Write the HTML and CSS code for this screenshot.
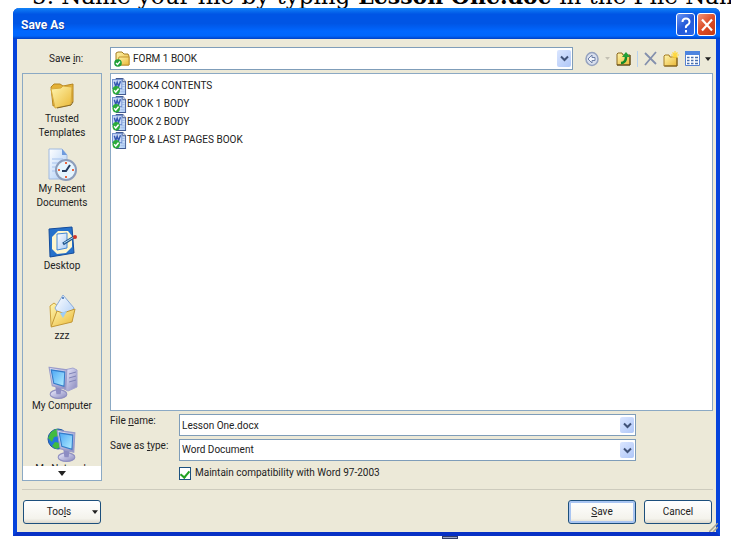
FILE: index.html
```html
<!DOCTYPE html>
<html lang="en">
<head>
    <meta charset="UTF-8">
    <meta name="viewport" content="width=device-width, initial-scale=1.0">
    <title>Save As</title>
    <link rel="stylesheet" href="styles.css">
</head>
<body>
    <!-- Shared icons -->
    <svg class="defs" width="0" height="0" aria-hidden="true">
        <defs>
            <linearGradient id="gold" x1="0" y1="0" x2="1" y2="1">
                <stop offset="0" stop-color="#fff6b0"/>
                <stop offset="1" stop-color="#eab735"/>
            </linearGradient>
            <linearGradient id="screen" x1="0" y1="0" x2="1" y2="1">
                <stop offset="0" stop-color="#4aa5f5"/>
                <stop offset="1" stop-color="#b5f0ff"/>
            </linearGradient>
            <linearGradient id="metal" x1="0" y1="0" x2="1" y2="1">
                <stop offset="0" stop-color="#eeeeff"/>
                <stop offset="1" stop-color="#8888bd"/>
            </linearGradient>
            <linearGradient id="paper" x1="0" y1="0" x2="1" y2="1">
                <stop offset="0" stop-color="#ffffff"/>
                <stop offset="1" stop-color="#a9cbf6"/>
            </linearGradient>
        </defs>
        <symbol id="chevron" viewBox="0 0 9 7">
            <path d="M1 1.5l3.5 3.5L8 1.5" fill="none" stroke="#405278" stroke-width="2"/>
        </symbol>
        <symbol id="triangle" viewBox="0 0 8 5">
            <path d="M0 0h8L4 5z" fill="currentColor"/>
        </symbol>
        <symbol id="word-doc" viewBox="0 0 16 16" preserveAspectRatio="none">
            <path d="M4.500 .5h7l3 3v12h-10z" fill="url(#paper)" stroke="#435b91"/>
            <path d="M11.500 .5v3h3" fill="#fff" stroke="#435b91"/>
            <path d="M11 6h2.500M11 8h2.500M9 11h4.500M9 13h4.500" stroke="#a3bce6"/>
            <rect x="0.500" y="1.500" width="10" height="8.500" fill="#cddcf8" stroke="#6f8fd0"/>
            <path d="M2.500 3.500L4 8l1.500-4L7 8l2-5" fill="none" stroke="#3358b0" stroke-width="1.500"/>
            <circle cx="4.500" cy="11.500" r="4" fill="#2bab3c"/>
            <path d="M2.300 11.500L4 13.200l3-3.200" fill="none" stroke="#fff" stroke-width="1.500"/>
        </symbol>
        <symbol id="monitor" viewBox="0 0 22 28" preserveAspectRatio="none">
            <ellipse cx="11" cy="24" rx="8" ry="3.500" fill="url(#metal)" stroke="#8f8fc0"/>
            <path d="M8 18l6 1-1 5H9z" fill="#8d8dc3"/>
            <path d="M2 2l17 2-1 16L5 17z" fill="url(#metal)" stroke="#9a9cca"/>
            <path d="M4 4l13 1.800-.8 11.700L6.500 15z" fill="url(#screen)" stroke="#347bc9"/>
        </symbol>
    </svg>

    <p class="document-line">5. Name your file by typing <b>Lesson One.doc</b> in the File Name</p>

    <form class="dialog">
        <header class="title-bar">
            <h1>Save As</h1>
            <button type="button" class="title-btn" aria-label="Help">
                <svg width="14" height="18" viewBox="0 0 14 18"><path d="M3.500 6Q3.500 2.500 7 2.500T10.500 6Q10.500 8 8.500 9T7 12M7 14v2.500" fill="none" stroke="#fff" stroke-width="2"/></svg>
            </button>
            <button type="button" class="title-btn close" aria-label="Close">
                <svg width="14" height="14" viewBox="0 0 14 14"><path d="M2 1.500l10 11M12 1.500l-10 11" stroke="#fff" stroke-width="2.200"/></svg>
            </button>
        </header>

        <div class="dialog-body">
            <div class="location">
                <label for="saveIn">Save <u>i</u>n:</label>
                <div class="combo folder-combo">
                    <svg class="combo-icon" width="16" height="16" viewBox="0 0 16 16">
                        <path d="M2 14V2l2-1h4l2 2h4l1 2v9z" fill="url(#gold)" stroke="#a47c24"/>
                        <path d="M3 14l2-8h10v8z" fill="url(#gold)" stroke="#c29431"/>
                        <circle cx="4" cy="12" r="3.800" fill="#20a038"/>
                        <path d="M2 12l1.500 1.500L6 10.500" fill="none" stroke="#fff" stroke-width="1.300"/>
                    </svg>
                    <select id="saveIn"><option>FORM 1 BOOK</option></select>
                    <span class="combo-arrow"><svg width="9" height="7"><use href="#chevron"/></svg></span>
                </div>
                <div class="toolbar">
                    <button type="button" aria-label="Back">
                        <svg width="14" height="16" viewBox="0 0 14 16"><ellipse cx="7" cy="8" rx="6" ry="6.500" fill="#d8dfed" stroke="#95a2bf" stroke-width="1.500"/><path d="M3 8l4-4v2.500h3v3H7V12z" fill="#f3f6fc" stroke="#6f80a6"/></svg>
                    </button>
                    <button type="button" class="muted" aria-label="Back history">
                        <svg width="5" height="3"><use href="#triangle"/></svg>
                    </button>
                    <button type="button" aria-label="Up one level">
                        <svg width="15" height="16" viewBox="0 0 15 16"><path d="M1 14V3l1-1h4l1 2h7v10z" fill="url(#gold)" stroke="#8a671e"/><path d="M1 14h13V4" fill="none" stroke="#554315"/><path d="M5 12q5 0 5-6" fill="none" stroke="#148b29" stroke-width="2.500"/><path d="M6 6l4-5 4 5z" fill="#20a038"/></svg>
                    </button>
                    <span class="divider"></span>
                    <button type="button" aria-label="Delete">
                        <svg width="13" height="15" viewBox="0 0 13 15"><path d="M1 2l11 11M12 1L1 14" stroke="#8490ad" stroke-width="1.800"/></svg>
                    </button>
                    <button type="button" aria-label="Create new folder">
                        <svg width="16" height="16" viewBox="0 0 16 16"><path d="M1 15V5l1-1h4l1 2h7v9z" fill="url(#gold)" stroke="#a57c24"/><path d="M1.500 15h12.500V7" fill="none" stroke="#7a5c1c"/><path d="M12 0v8M8 4h8M9.500 1.500l5 5M14.500 1.500l-5 5" stroke="#ffd83d" stroke-width="1.200"/></svg>
                    </button>
                    <button type="button" class="views" aria-label="Views">
                        <svg width="15" height="15" viewBox="0 0 15 15"><path d="M.5.5h14v14H.5z" fill="#fff" stroke="#5681d1"/><path d="M0 0h15v4H0z" fill="#4d84df"/><path d="M2 6.500h2.500M6 6.500h2.500M10 6.500h3M2 9.500h2.500M6 9.500h2.500M10 9.500h3M2 12.500h2.500M6 12.500h2.500M10 12.500h3" stroke="#486fae" stroke-width="1.500"/></svg>
                        <svg width="6" height="4"><use href="#triangle"/></svg>
                    </button>
                </div>
            </div>

            <div class="columns">
                <nav class="places">
                    <div class="place-list">
                        <a href="#" class="place">
                            <svg width="34" height="34" viewBox="0 0 34 34"><path d="M8 28L6 9l3-3h6l3 2 10-2v18z" fill="#e4b137" stroke="#b58623"/><path d="M6 11l10-1 2-2 9 1-1 18-16 3z" fill="url(#gold)" stroke="#d7aa3d"/><path d="M12 30l14-3 2-3" fill="none" stroke="#856929"/></svg>
                            Trusted<br>Templates
                        </a>
                        <a href="#" class="place">
                            <svg width="34" height="34" viewBox="0 0 34 34"><path d="M4 1h13l5 6v24H4z" fill="url(#paper)" stroke="#a0b9df"/><path d="M17 1v6h5" fill="#6f9bdd"/><path d="M7 11h11M7 15h8M7 19h6M7 23h5" stroke="#a6c3ee"/><circle cx="21" cy="22" r="10" fill="#e5f5ff" stroke="#8c9dbb" stroke-width="2"/><path d="M21 14v2M29 22h-2M21 30v-2M13 22h2" stroke="#ee653d" stroke-width="2"/><path d="M25 17l-4 6h-4" fill="none" stroke="#263d60" stroke-width="2"/></svg>
                            My Recent<br>Documents
                        </a>
                        <a href="#" class="place">
                            <svg width="34" height="34" viewBox="0 0 34 34"><path d="M4 4l23-2 2 26-24 4z" fill="#2772cb" stroke="#144c9b"/><path d="M7 12l6-6h10l4 5v11l-6 6-9 1-5-5z" fill="#fff6cd"/><path d="M12 9l10-1v15l-10 2z" fill="url(#paper)" stroke="#4388d5"/><path d="M18 19l11-7" stroke="#25588f" stroke-width="3"/><path d="M19 18l10-6" stroke="#a4d7f4"/><circle cx="30" cy="12" r="2" fill="#cf3527"/></svg>
                            Desktop
                        </a>
                        <a href="#" class="place">
                            <svg width="34" height="34" viewBox="0 0 34 34"><path d="M6 31l-1-20 4-3 4 3 13 2v13z" fill="url(#gold)" stroke="#cda33e"/><path d="M18 0l11 13-11 13-8-13z" fill="url(#paper)" stroke="#8aabd7"/><path d="M6 32l6-16 6 2 12-4-3 13z" fill="url(#gold)" stroke="#c39836"/><path d="M15 18l7-2-4 7z" fill="#9dccf6"/><circle cx="18" cy="3" r="1" fill="#376bb2"/></svg>
                            zzz
                        </a>
                        <a href="#" class="place">
                            <svg width="34" height="34" viewBox="0 0 34 34"><path d="M19 5l9-2 4 2v17l-9 4-4-2z" fill="url(#metal)" stroke="#a3a5cf"/><path d="M24 9l7-2M24 13l7-2M24 17l7-2" stroke="#8084b8"/><use href="#monitor" x="2" y="0" width="23" height="34"/></svg>
                            My Computer
                        </a>
                        <a href="#" class="place">
                            <svg width="34" height="34" viewBox="0 0 34 34"><circle cx="13" cy="11" r="10" fill="#2375dd" stroke="#2457a5"/><path d="M6 4l5-3 6 2-3 5-5 1-2 5-4-4zM10 14l5 1 1 4-5 2-4-3z" fill="#42bb3f"/><use href="#monitor" x="10" y="0" width="23" height="34"/></svg>
                            My Network<br>Places
                        </a>
                    </div>
                    <button type="button" class="scroll-down" aria-label="Scroll down">
                        <svg width="8" height="5"><use href="#triangle"/></svg>
                    </button>
                </nav>

                <main class="content">
                    <ul class="file-list">
                        <li><svg width="15" height="17"><use href="#word-doc"/></svg>BOOK4 CONTENTS</li>
                        <li><svg width="15" height="17"><use href="#word-doc"/></svg>BOOK 1 BODY</li>
                        <li><svg width="15" height="17"><use href="#word-doc"/></svg>BOOK 2 BODY</li>
                        <li><svg width="15" height="17"><use href="#word-doc"/></svg>TOP &amp; LAST PAGES BOOK</li>
                    </ul>
                    <div class="fields">
                        <label for="fileName">File <u>n</u>ame:</label>
                        <div class="combo">
                            <input type="text" id="fileName" value="Lesson One.docx">
                            <span class="combo-arrow"><svg width="9" height="7"><use href="#chevron"/></svg></span>
                        </div>
                        <label for="fileType">Save as <u>t</u>ype:</label>
                        <div class="combo">
                            <select id="fileType"><option>Word Document</option></select>
                            <span class="combo-arrow"><svg width="9" height="7"><use href="#chevron"/></svg></span>
                        </div>
                        <label class="compat">
                            <input type="checkbox" checked>
                            Maintain compatibility with Word 97-2003
                        </label>
                    </div>
                </main>
            </div>

            <footer class="actions">
                <button type="button" class="btn tools">
                    <span>Too<u>l</u>s</span>
                    <svg width="6" height="4"><use href="#triangle"/></svg>
                </button>
                <button type="submit" class="btn primary"><span><u>S</u>ave</span></button>
                <button type="button" class="btn">Cancel</button>
            </footer>
        </div>
        <svg class="grip" width="9" height="9" viewBox="0 0 9 9"><path d="M0 9l9-9M4 9l5-5" stroke="#a5a292" stroke-width="1.500"/></svg>
    </form>
    <div class="page-mark"></div>
</body>
</html>
```

FILE: styles.css
```css
* {
    margin: 0;
    padding: 0;
    box-sizing: border-box;
}

body {
    background: white;
    color: #222;
    font-family: Roboto, 'Liberation Sans', sans-serif;
    font-size: 10px;
    line-height: 14px;
    overflow-x: hidden;
}

button, input, select {
    font: inherit;
    color: inherit;
}

button {
    border: none;
    background: none;
}

svg {
    display: block;
    flex: none;
}

a {
    color: inherit;
    text-decoration: none;
}

.defs {
    position: absolute;
}

.document-line {
    height: 8px;
    padding-left: 32px;
    overflow: hidden;
    display: flex;
    align-items: flex-end;
    gap: 8px;
    font-family: 'DejaVu Serif', serif;
    font-size: 23px;
    line-height: 24px;
    white-space: nowrap;
    color: black;
}

.document-line b {
    font-size: 22px;
}

.dialog {
    position: relative;
    margin: 0 11px 0 13px;
    border: 4px solid #0543dc;
    border-top: none;
    border-bottom-color: #0831c5;
    border-radius: 6px 6px 0 0;
    background: #ece9d8;
}

.title-bar {
    display: flex;
    align-items: center;
    gap: 2px;
    height: 31px;
    margin: 0 -4px;
    padding: 0 4px 0 8px;
    border-radius: 6px 6px 0 0;
    background: linear-gradient(#1182f7, #0055e5 20%, #0055e5 50%, #0067ff 75%, #0066fc 90%, #0040c4);
}

.title-bar h1 {
    flex: 1;
    padding-top: 3px;
    color: white;
    font-size: 12px;
    text-shadow: 1px 1px #0e3a9e;
}

.title-btn {
    display: flex;
    align-items: center;
    justify-content: center;
    width: 19px;
    height: 23px;
    margin-top: 2px;
    border: 1px solid white;
    border-radius: 3px;
    background: linear-gradient(135deg, #6b96f5, #2258d8 50%, #2a68e7);
}

.title-btn.close {
    background: linear-gradient(135deg, #ef9479, #dc4c27 50%, #c53a14);
}

.dialog-body {
    padding: 8px 3px 8px 5px;
}

.location {
    display: flex;
    align-items: center;
    gap: 12px;
    padding-bottom: 3px;
}

.location > label {
    width: 76px;
    padding-left: 27px;
    white-space: nowrap;
}

.combo {
    position: relative;
    flex: 1;
    height: 23px;
    border: 1px solid #7f9db9;
    background: white;
}

.combo select,
.combo input {
    display: block;
    width: 100%;
    height: 100%;
    padding: 0 20px 0 2px;
    border: none;
    outline: none;
    appearance: none;
    background: transparent;
}

.folder-combo select {
    padding-left: 22px;
}

.combo-icon {
    position: absolute;
    top: 3px;
    left: 3px;
}

.combo-arrow {
    position: absolute;
    top: 2px;
    right: 1px;
    bottom: 2px;
    display: flex;
    align-items: center;
    justify-content: center;
    width: 14px;
    border-radius: 2px;
    background: linear-gradient(135deg, #dbe6ff, #afc7f8);
    pointer-events: none;
}

.toolbar {
    display: flex;
    align-items: center;
    gap: 6px;
    padding-right: 2px;
}

.views {
    display: flex;
    align-items: center;
    gap: 5px;
}

.muted {
    color: #c3c0b3;
}

.divider {
    width: 1px;
    height: 16px;
    background: #b9d2ee;
}

.columns {
    display: flex;
    gap: 8px;
    padding-bottom: 8px;
    border-bottom: 1px solid #cdcbbd;
}

.places {
    width: 80px;
    border: 1px solid #8ba9c4;
}

.place-list {
    height: 392px;
    overflow: hidden;
}

.place {
    display: flex;
    flex-direction: column;
    align-items: center;
    justify-content: center;
    height: 70px;
    text-align: center;
}

.scroll-down {
    display: flex;
    align-items: center;
    justify-content: center;
    width: 100%;
    height: 14px;
    background: white;
}

.content {
    flex: 1;
    display: flex;
    flex-direction: column;
}

.file-list {
    flex: 1;
    padding: 3px 1px;
    border: 1px solid #8ba9c4;
    background: white;
    list-style: none;
}

.file-list li {
    display: flex;
    align-items: center;
    height: 18px;
}

.fields {
    display: grid;
    grid-template-columns: 61px minmax(0, 457px);
    gap: 3px 8px;
    padding: 3px 77px 1px 0;
}

.fields .combo {
    height: 22px;
}

.fields > label {
    white-space: nowrap;
}

.fields .compat {
    grid-column: 2;
    display: flex;
    align-items: center;
    gap: 4px;
    padding-top: 2px;
}

.compat input {
    display: flex;
    justify-content: center;
    width: 12px;
    height: 13px;
    appearance: none;
    border: 1px solid #1c5180;
    background: white;
}

.compat input:checked::before {
    content: '';
    width: 4px;
    height: 7px;
    margin-top: 1px;
    border: solid #21a121;
    border-width: 0 2px 2px 0;
    transform: rotate(40deg);
}

.actions {
    display: flex;
    gap: 8px;
    padding: 10px 1px 0;
}

.btn {
    display: flex;
    align-items: center;
    justify-content: center;
    width: 68px;
    height: 24px;
    border: 1px solid #1c4f7c;
    border-radius: 3px;
    background: linear-gradient(white, #f4f3ec 80%, #dcd8cc);
}

.btn.tools {
    width: 78px;
    margin-right: auto;
    padding: 0 2px;
}

.tools span {
    flex: 1;
}

.btn.primary {
    box-shadow: inset 0 0 0 2px #a9c5f2;
}

.grip {
    position: absolute;
    right: -2px;
    bottom: 0;
}

.page-mark {
    width: 16px;
    height: 3px;
    margin-left: 442px;
    border: 1px solid #333e68;
    background: #9aa6c8;
}
```
